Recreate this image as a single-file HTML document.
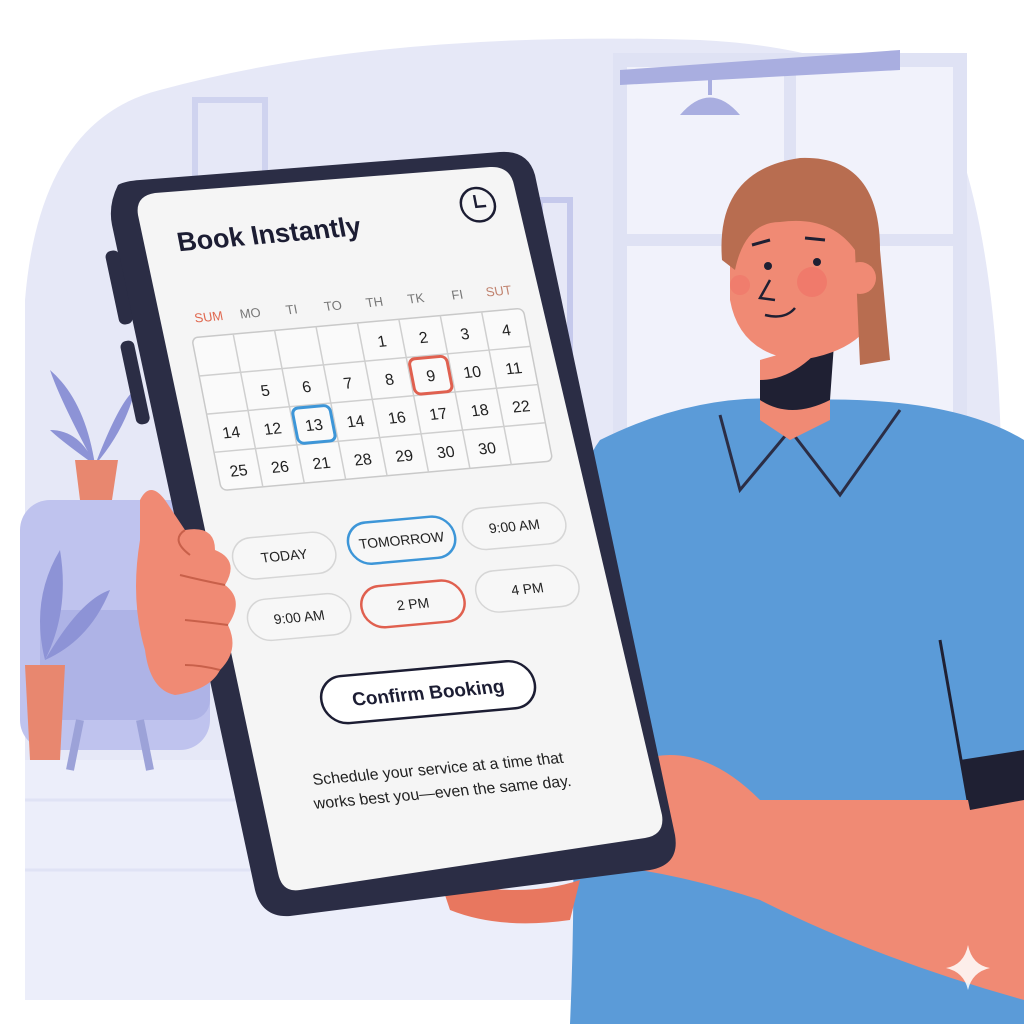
<!DOCTYPE html>
<html><head><meta charset="utf-8"><style>
html,body{margin:0;padding:0;background:#fff;width:1024px;height:1024px;overflow:hidden}
svg{display:block}
text{font-family:"Liberation Sans",sans-serif}
</style></head><body>
<svg width="1024" height="1024" viewBox="0 0 1024 1024" xmlns="http://www.w3.org/2000/svg">
<!-- background blob -->
<path d="M160 90 Q380 30 700 40 Q900 50 960 150 Q1010 300 1000 600 L1000 1000 L120 1000 Q30 990 25 850 L25 300 Q40 120 160 90Z" fill="#e6e8f7"/>
<rect x="620" y="60" width="340" height="400" fill="#f1f2fb"/>
<rect x="620" y="60" width="340" height="400" fill="none" stroke="#dfe2f4" stroke-width="14"/>
<line x1="790" y1="60" x2="790" y2="460" stroke="#dfe2f4" stroke-width="12"/>
<line x1="620" y1="240" x2="960" y2="240" stroke="#dfe2f4" stroke-width="12"/>
<path d="M620 70 L900 50 L900 70 L620 85Z" fill="#a9aee0"/>
<line x1="710" y1="75" x2="710" y2="95" stroke="#a9aee0" stroke-width="4"/>
<path d="M680 115 Q710 80 740 115Z" fill="#a9aee0"/>
<rect x="195" y="100" width="70" height="90" fill="none" stroke="#cfd3ef" stroke-width="6"/>
<rect x="540" y="200" width="30" height="220" fill="none" stroke="#c5c9ec" stroke-width="6"/>
<!-- floor -->
<rect x="25" y="760" width="600" height="240" fill="#eceefa"/>
<line x1="25" y1="800" x2="600" y2="800" stroke="#e0e3f5" stroke-width="3"/>
<line x1="25" y1="870" x2="600" y2="870" stroke="#e0e3f5" stroke-width="3"/>
<!-- chair -->
<rect x="20" y="500" width="190" height="250" rx="30" fill="#bfc3ee"/>
<rect x="40" y="610" width="170" height="110" rx="20" fill="#aeb3e6"/>
<line x1="80" y1="720" x2="70" y2="770" stroke="#9ca2d8" stroke-width="8"/>
<line x1="140" y1="720" x2="150" y2="770" stroke="#9ca2d8" stroke-width="8"/>
<!-- plants -->
<path d="M95 465 Q60 400 50 370 Q85 400 95 465Z M95 465 Q120 400 135 390 Q125 430 95 465Z M95 465 Q60 440 50 430 Q80 430 95 465Z" fill="#8d93d6"/>
<path d="M75 460 L118 460 L112 500 L80 500Z" fill="#e8876f"/>
<path d="M45 660 Q30 600 60 550 Q70 610 45 660Z M45 660 Q80 600 110 590 Q90 640 45 660Z" fill="#8d93d6"/>
<path d="M25 665 L65 665 L60 760 L30 760Z" fill="#e8876f"/>
<!-- person body -->
<path d="M600 440 Q700 390 800 400 Q950 395 1024 440 L1024 1024 L570 1024 Q580 800 560 600 Q570 480 600 440Z" fill="#5b9bd8"/>
<path d="M720 415 L740 490 L790 430 L840 495 L900 410" fill="none" stroke="#2b2d45" stroke-width="3"/>
<path d="M760 360 L760 420 L790 440 L830 420 L830 340Z" fill="#f08a74"/>
<path d="M760 380 Q800 380 835 330 L830 400 Q790 420 760 400Z" fill="#1f2033"/>
<!-- head -->
<path d="M730 230 Q740 180 800 170 Q860 170 875 220 L880 300 Q870 350 800 360 Q740 355 730 300Z" fill="#f08a74"/>
<path d="M722 260 Q715 170 800 158 Q880 155 880 250 L890 360 L860 365 L855 250 Q830 215 780 222 Q745 222 735 270Z" fill="#b86d50"/>
<circle cx="860" cy="278" r="16" fill="#f08a74"/>
<circle cx="812" cy="282" r="15" fill="#f06f66" opacity=".6"/>
<circle cx="740" cy="285" r="10" fill="#f06f66" opacity=".5"/>
<circle cx="768" cy="266" r="4" fill="#1f2033"/><circle cx="817" cy="262" r="4" fill="#1f2033"/>
<path d="M752 245 L770 240 M805 238 L825 240" stroke="#1f2033" stroke-width="3" fill="none"/>
<path d="M770 280 L760 298 L775 300" stroke="#1f2033" stroke-width="2.5" fill="none"/>
<path d="M765 315 Q785 320 795 308" stroke="#1f2033" stroke-width="2.5" fill="none"/>
<!-- arm -->
<path d="M940 640 L975 840" stroke="#1f2033" stroke-width="3"/>
<path d="M640 760 Q700 740 760 800 L1024 800 L1024 1000 Q880 960 760 900 Q700 880 640 870Z" fill="#f08a74"/>
<path d="M960 760 L1024 750 L1024 800 L970 810Z" fill="#1f2033"/>
<path d="M440 880 Q520 900 580 880 L570 920 Q500 930 450 910Z" fill="#e8775f"/>
<!-- tablet -->
<path d="M118 185 Q108 205 112 225 L255 890 Q262 918 290 916 L650 870 Q680 865 675 835 L535 175 Q528 150 500 152 L140 180 Q125 181 118 185Z" fill="#2b2d45"/>
<rect x="112" y="250" width="14" height="75" rx="6" fill="#2b2d45" transform="rotate(-12 119 287)"/>
<rect x="128" y="340" width="14" height="85" rx="6" fill="#2b2d45" transform="rotate(-12 135 382)"/>
<path d="M155 193 L490 167 Q510 166 514 185 L662 815 Q665 835 645 838 L300 890 Q282 893 278 873 L138 215 Q135 196 155 193Z" fill="#f5f5f5"/>
<!-- hand -->
<path d="M140 500 Q150 480 165 500 L185 530 Q215 525 215 550 Q240 560 225 585 Q245 600 228 625 Q240 650 220 670 Q210 690 175 695 Q150 690 145 650 Q130 600 140 540Z" fill="#f08a74"/>
<path d="M185 530 Q170 540 190 555 M180 575 Q200 580 225 585 M185 620 Q205 622 228 625 M185 665 Q200 665 220 670" stroke="#c8604a" stroke-width="2" fill="none"/>
<!-- screen content -->
<g transform="matrix(0.986,-0.088,0.19,0.979,140,195)">
<text x="28" y="60" font-size="27" font-weight="bold" fill="#1c1d33">Book Instantly</text>
<circle cx="335" cy="40" r="17" fill="none" stroke="#1c1d33" stroke-width="2.5"/>
<path d="M333 30 L333 42 L343 42" stroke="#1c1d33" stroke-width="2.5" fill="none"/>
<g font-size="13" fill="#777" text-anchor="middle">
<text x="45" y="133" fill="#e0684f">SUM</text><text x="87" y="133">MO</text><text x="129" y="133">TI</text><text x="171" y="133">TO</text><text x="213" y="133">TH</text><text x="255" y="133">TK</text><text x="297" y="133">FI</text><text x="339" y="133" fill="#c0826e">SUT</text>
</g>
<g fill="#fafafa" stroke="#c9c9c9" stroke-width="1.5">
<rect x="24" y="148" width="336" height="156" rx="6"/>
</g>
<g stroke="#cfcfcf" stroke-width="1.5">
<line x1="24" y1="187" x2="360" y2="187"/><line x1="24" y1="226" x2="360" y2="226"/><line x1="24" y1="265" x2="360" y2="265"/>
<line x1="66" y1="148" x2="66" y2="304"/><line x1="108" y1="148" x2="108" y2="304"/><line x1="150" y1="148" x2="150" y2="304"/><line x1="192" y1="148" x2="192" y2="304"/><line x1="234" y1="148" x2="234" y2="304"/><line x1="276" y1="148" x2="276" y2="304"/><line x1="318" y1="148" x2="318" y2="304"/>
</g>
<g font-size="16" fill="#222" text-anchor="middle">
<text x="213" y="174">1</text><text x="255" y="174">2</text><text x="297" y="174">3</text><text x="339" y="174">4</text>
<text x="87" y="213">5</text><text x="129" y="213">6</text><text x="171" y="213">7</text><text x="213" y="213">8</text><text x="255" y="213">9</text><text x="297" y="213">10</text><text x="339" y="213">11</text>
<text x="45" y="252">14</text><text x="87" y="252">12</text><text x="129" y="252">13</text><text x="171" y="252">14</text><text x="213" y="252">16</text><text x="255" y="252">17</text><text x="297" y="252">18</text><text x="339" y="252">22</text>
<text x="45" y="291">25</text><text x="87" y="291">26</text><text x="129" y="291">21</text><text x="171" y="291">28</text><text x="213" y="291">29</text><text x="255" y="291">30</text><text x="297" y="291">30</text>
</g>
<rect x="236" y="189" width="38" height="36" rx="6" fill="none" stroke="#e0604f" stroke-width="3"/>
<rect x="110" y="228" width="38" height="36" rx="6" fill="none" stroke="#3d96d8" stroke-width="3"/>
<g font-size="14" fill="#222" text-anchor="middle">
<rect x="22" y="354" width="104" height="42" rx="21" fill="#f7f7f7" stroke="#d6d6d6" stroke-width="1.5"/><text x="74" y="380">TODAY</text>
<rect x="140" y="349" width="108" height="42" rx="21" fill="#f7f7f7" stroke="#3d96d8" stroke-width="2.5"/><text x="194" y="375">TOMORROW</text>
<rect x="257" y="345" width="104" height="42" rx="21" fill="#f7f7f7" stroke="#d6d6d6" stroke-width="1.5"/><text x="309" y="371">9:00 AM</text>
<rect x="25" y="417" width="104" height="42" rx="21" fill="#f7f7f7" stroke="#d6d6d6" stroke-width="1.5"/><text x="77" y="443">9:00 AM</text>
<rect x="141" y="414" width="104" height="42" rx="21" fill="#f7f7f7" stroke="#e0604f" stroke-width="2.5"/><text x="193" y="440">2 PM</text>
<rect x="258" y="409" width="104" height="42" rx="21" fill="#f7f7f7" stroke="#d6d6d6" stroke-width="1.5"/><text x="310" y="435">4 PM</text>
</g>
<rect x="83" y="501" width="216" height="48" rx="24" fill="#fff" stroke="#1c1d33" stroke-width="2.5"/>
<text x="191" y="532" font-size="19" font-weight="bold" fill="#1c1d33" text-anchor="middle">Confirm Booking</text>
<g font-size="16" fill="#222" text-anchor="middle">
<text x="186" y="608">Schedule your service at a time that</text>
<text x="186" y="632">works best you—even the same day.</text>
</g>
</g>
<path d="M968 945 Q972 965 990 968 Q972 972 968 990 Q964 972 946 968 Q964 965 968 945Z" fill="#fff" opacity=".85"/>
</svg>
</body></html>
